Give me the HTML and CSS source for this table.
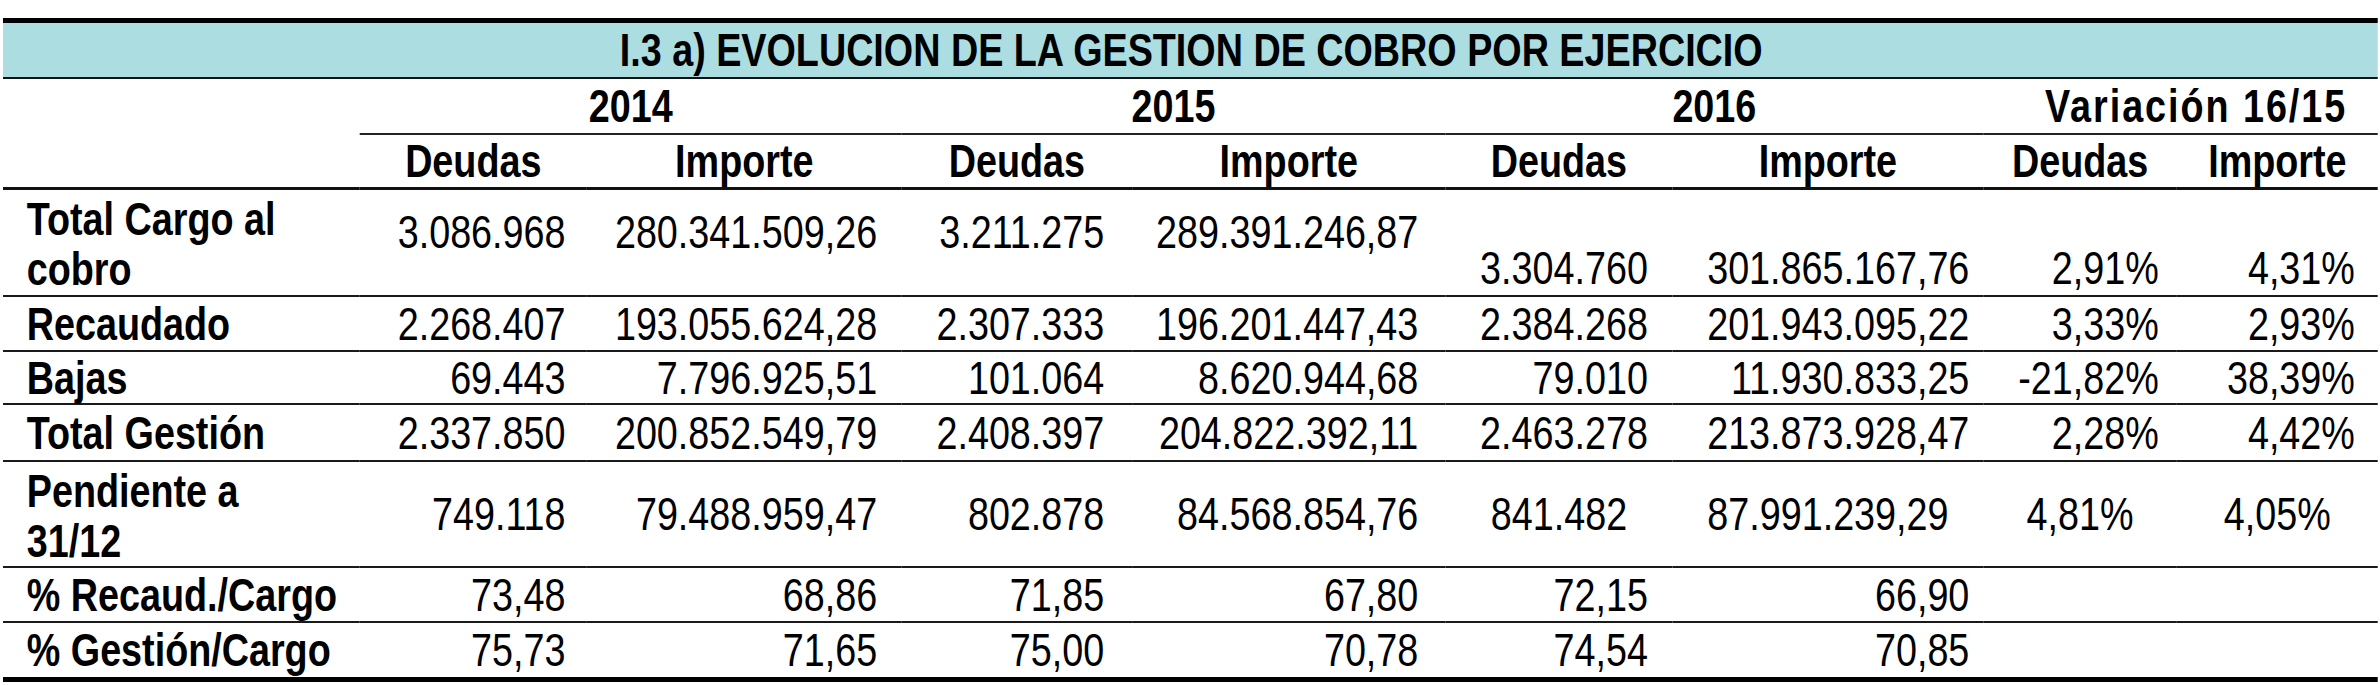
FILE: index.html
```html
<!DOCTYPE html>
<html lang="es">
<head>
<meta charset="utf-8">
<title>I.3 a) Evolución de la gestión de cobro por ejercicio</title>
<link rel="stylesheet" href="styles.css">
</head>
<body>
<div class="frame">
<table class="sheet">
  <colgroup>
    <col class="c-label">
    <col class="c-deu">
    <col class="c-imp">
    <col class="c-deu2">
    <col class="c-imp2">
    <col class="c-deu3">
    <col class="c-imp3">
    <col class="c-vd">
    <col class="c-vi">
  </colgroup>
  <thead>
    <tr class="r-title">
      <th class="title" colspan="9">I.3 a) EVOLUCION DE LA GESTION DE COBRO POR EJERCICIO</th>
    </tr>
    <tr class="r-year">
      <th class="blank" rowspan="2"></th>
      <th class="year" colspan="2">2014</th>
      <th class="year" colspan="2">2015</th>
      <th class="year" colspan="2">2016</th>
      <th class="year var" colspan="2">Variación 16/15</th>
    </tr>
    <tr class="r-sub">
      <th class="sub">Deudas</th>
      <th class="sub">Importe</th>
      <th class="sub">Deudas</th>
      <th class="sub">Importe</th>
      <th class="sub">Deudas</th>
      <th class="sub">Importe</th>
      <th class="sub">Deudas</th>
      <th class="sub">Importe</th>
    </tr>
  </thead>
  <tbody>
    <tr class="r-double r1">
      <th class="label">Total Cargo al<br>cobro</th>
      <td class="upper">3.086.968</td>
      <td class="upper">280.341.509,26</td>
      <td class="upper">3.211.275</td>
      <td class="upper">289.391.246,87</td>
      <td class="bottom">3.304.760</td>
      <td class="bottom">301.865.167,76</td>
      <td class="bottom">2,91%</td>
      <td class="bottom">4,31%</td>
    </tr>
    <tr class="r2">
      <th class="label">Recaudado</th>
      <td>2.268.407</td>
      <td>193.055.624,28</td>
      <td>2.307.333</td>
      <td>196.201.447,43</td>
      <td>2.384.268</td>
      <td>201.943.095,22</td>
      <td>3,33%</td>
      <td>2,93%</td>
    </tr>
    <tr class="r3">
      <th class="label">Bajas</th>
      <td>69.443</td>
      <td>7.796.925,51</td>
      <td>101.064</td>
      <td>8.620.944,68</td>
      <td>79.010</td>
      <td>11.930.833,25</td>
      <td>-21,82%</td>
      <td>38,39%</td>
    </tr>
    <tr class="r4">
      <th class="label">Total Gestión</th>
      <td>2.337.850</td>
      <td>200.852.549,79</td>
      <td>2.408.397</td>
      <td>204.822.392,11</td>
      <td>2.463.278</td>
      <td>213.873.928,47</td>
      <td>2,28%</td>
      <td>4,42%</td>
    </tr>
    <tr class="r-double r5">
      <th class="label">Pendiente a<br>31/12</th>
      <td>749.118</td>
      <td>79.488.959,47</td>
      <td>802.878</td>
      <td>84.568.854,76</td>
      <td class="center">841.482</td>
      <td class="center">87.991.239,29</td>
      <td class="center">4,81%</td>
      <td class="center">4,05%</td>
    </tr>
    <tr class="r6">
      <th class="label">% Recaud./Cargo</th>
      <td>73,48</td>
      <td>68,86</td>
      <td>71,85</td>
      <td>67,80</td>
      <td>72,15</td>
      <td>66,90</td>
      <td></td>
      <td></td>
    </tr>
    <tr class="r7 last">
      <th class="label">% Gestión/Cargo</th>
      <td>75,73</td>
      <td>71,65</td>
      <td>75,00</td>
      <td>70,78</td>
      <td>74,54</td>
      <td>70,85</td>
      <td></td>
      <td></td>
    </tr>
  </tbody>
</table>
</div>
</body>
</html>
```

FILE: styles.css
```css
html, body {
  margin: 0;
  padding: 0;
  background: #ffffff;
  overflow: hidden;
}

body {
  width: 2380px;
  height: 685px;
}

/* The sheet uses an Arial Narrow look: Liberation Sans (Arial metrics)
   laid out at full width, then condensed horizontally to 82%. */
.frame {
  padding: 18px 0 0 3px;
}

.sheet {
  width: 2896px;
  transform: scaleX(0.82);
  transform-origin: 0 0;
  table-layout: fixed;
  border-collapse: separate;
  border-spacing: 0;
  border-top: 5px solid #000;
  border-bottom: 5px solid #000;
  font-family: "Liberation Sans", Arial, sans-serif;
  font-size: 46px;
  line-height: 50px;
  color: #000;
}

.c-label { width: 435px; }
.c-deu { width: 277px; }
.c-imp { width: 384px; }
.c-deu2 { width: 281px; }
.c-imp2 { width: 382px; }
.c-deu3 { width: 277px; }
.c-imp3 { width: 379px; }
.c-vd { width: 236px; }
.c-vi { width: 245px; }

th, td {
  padding: 0;
  vertical-align: middle;
  white-space: nowrap;
}

th {
  font-weight: bold;
}

.title {
  background: #acdde1;
  text-align: center;
  border-bottom: 2px solid #111;
  padding-left: 2px;
}

.r-title { height: 56px; }
.r-year { height: 56px; }
.r-sub { height: 55px; }

.year {
  text-align: center;
  border-bottom: 2px solid #222;
}

.year.var {
  padding-left: 38px;
  letter-spacing: 2.4px;
}

.blank {
  border-bottom: 3px solid #111;
}

.sub {
  text-align: center;
  border-bottom: 3px solid #111;
}

tbody th, tbody td {
  border-bottom: 2px solid #1a1a1a;
}

tbody tr.last th, tbody tr.last td {
  border-bottom: none;
}

.label {
  text-align: left;
  padding-left: 29px;
}

tbody td {
  font-weight: normal;
  text-align: right;
}

tbody td:nth-child(2) { padding-right: 26px; }
tbody td:nth-child(3) { padding-right: 30px; }
tbody td:nth-child(4) { padding-right: 34px; }
tbody td:nth-child(5) { padding-right: 33px; }
tbody td:nth-child(6) { padding-right: 30px; }
tbody td:nth-child(7) { padding-right: 17px; }
tbody td:nth-child(8) { padding-right: 22px; }
tbody td:nth-child(9) { padding-right: 28px; }

.r-double .label {
  vertical-align: top;
  padding-top: 4px;
}

.r1 { height: 107px; }
.r2 { height: 55px; }
.r3 { height: 53px; }
.r4 { height: 57px; }
.r5 { height: 106px; }
.r6 { height: 55px; }
.r7 { height: 54px; }

td.upper {
  vertical-align: middle;
  padding-bottom: 22px;
}

td.bottom {
  vertical-align: bottom;
  padding-bottom: 2px;
}

tbody td.center {
  text-align: center;
  padding-left: 0;
  padding-right: 0;
}
```
